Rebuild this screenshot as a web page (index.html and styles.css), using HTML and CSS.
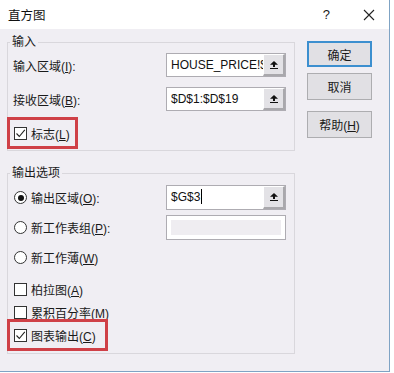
FILE: index.html
```html
<!DOCTYPE html>
<html lang="zh-CN">

<head>
  <meta charset="UTF-8">
  <meta name="viewport" content="width=device-width, initial-scale=1.0">
  <title>直方图</title>
  <link rel="stylesheet" href="styles.css">
</head>

<body>
  <div class="window">
    <!-- заголовок окна -->
    <div class="titlebar">
      <span class="titlebar__title">直方图</span>
      <span class="titlebar__help">?</span>
      <svg class="titlebar__close" width="12" height="12" viewBox="0 0 12 12">
        <path d="M1 1 L11 11 M11 1 L1 11" stroke="#222" stroke-width="1.1" fill="none" />
      </svg>
    </div>

    <div class="main">
      <div class="groups">
        <!-- ввод -->
        <fieldset class="group group_in">
          <legend class="group__legend">输入</legend>
          <div class="group__body">
            <div class="row">
              <span class="row__label">输入区域(<u>I</u>):</span>
              <div class="ref">
                <span class="ref__text">HOUSE_PRICE!$</span>
                <span class="ref__btn">
                  <svg width="8" height="8" viewBox="0 0 8 8">
                    <path d="M0 3.8 L4 0 L8 3.8 H5 V6 H3 V3.8 Z M0 7 H8 V8 H0 Z" fill="#111" />
                  </svg>
                </span>
              </div>
            </div>
            <div class="row row_second">
              <span class="row__label">接收区域(<u>B</u>):</span>
              <div class="ref">
                <span class="ref__text">$D$1:$D$19</span>
                <span class="ref__btn">
                  <svg width="8" height="8" viewBox="0 0 8 8">
                    <path d="M0 3.8 L4 0 L8 3.8 H5 V6 H3 V3.8 Z M0 7 H8 V8 H0 Z" fill="#111" />
                  </svg>
                </span>
              </div>
            </div>
            <div class="opt opt_mark opt_label">
              <span class="box">
                <svg width="11" height="11" viewBox="0 0 11 11">
                  <path d="M1.5 5.5 L4.3 8.5 L9.8 1.8" stroke="#222" stroke-width="1.1" fill="none" />
                </svg>
              </span>
              <span>标志(<u>L</u>)</span>
            </div>
          </div>
        </fieldset>

        <!-- вывод -->
        <fieldset class="group group_out">
          <legend class="group__legend">输出选项</legend>
          <div class="group__body">
            <div class="row row_out">
              <div class="opt">
                <span class="radio radio_on"></span>
                <span>输出区域(<u>O</u>):</span>
              </div>
              <div class="ref ref_out">
                <span class="ref__text">$G$3<span class="caret"></span></span>
                <span class="ref__btn">
                  <svg width="8" height="8" viewBox="0 0 8 8">
                    <path d="M0 3.8 L4 0 L8 3.8 H5 V6 H3 V3.8 Z M0 7 H8 V8 H0 Z" fill="#111" />
                  </svg>
                </span>
              </div>
            </div>
            <div class="row row_out row_second-out">
              <div class="opt">
                <span class="radio"></span>
                <span>新工作表组(<u>P</u>):</span>
              </div>
              <div class="ref ref_disabled"></div>
            </div>
            <div class="opt opt_book">
              <span class="radio"></span>
              <span>新工作薄(<u>W</u>)</span>
            </div>
            <div class="opt opt_pareto">
              <span class="box"></span>
              <span>柏拉图(<u>A</u>)</span>
            </div>
            <div class="opt opt_near">
              <span class="box"></span>
              <span>累积百分率(<u>M</u>)</span>
            </div>
            <div class="opt opt_near opt_mark opt_wide">
              <span class="box">
                <svg width="11" height="11" viewBox="0 0 11 11">
                  <path d="M1.5 5.5 L4.3 8.5 L9.8 1.8" stroke="#222" stroke-width="1.1" fill="none" />
                </svg>
              </span>
              <span>图表输出(<u>C</u>)</span>
            </div>
          </div>
        </fieldset>
      </div>

      <!-- кнопки -->
      <div class="buttons">
        <button class="btn btn_default">确定</button>
        <button class="btn">取消</button>
        <button class="btn btn_help">帮助(<u>H</u>)</button>
      </div>
    </div>
  </div>
</body>

</html>
```

FILE: styles.css
```css
* {
  box-sizing: border-box
}

body {
  margin: 0;
  background-color: #fff;
  font-family: "Liberation Sans", "Noto Sans CJK SC", sans-serif;
  font-size: 12px;
  color: #1a1a1a
}

.window {
  width: 390px;
  height: 372px;
  display: flex;
  flex-direction: column;
  background-color: #f0eef3;
  border-right: 1px solid #7fa3c4;
  border-bottom: 1px solid #7fa3c4
}

.titlebar {
  height: 29px;
  display: flex;
  align-items: center;
  padding: 0 14px 0 8px;
  background-color: #fff
}

.titlebar__title {
  font-size: 12.5px;
  color: #111
}

.titlebar__help {
  margin-left: auto;
  margin-right: 33px;
  font-size: 13px
}

.main {
  flex: 1;
  display: flex;
  padding: 5px 0 0 7px
}

.groups {
  width: 288px
}

.group {
  margin: 0;
  padding: 2px 8px 7px 5px;
  border: 1px solid #d9d7dc
}

.group_out {
  margin-top: 14px;
  padding-top: 3px;
  padding-bottom: 8px
}

.group__legend {
  margin-left: -3px;
  padding: 0 2px;
  line-height: 17px
}

.group__body {
  display: flex;
  flex-direction: column;
  align-items: flex-start
}

.row {
  width: 100%;
  height: 24px;
  display: flex;
  align-items: center;
  justify-content: space-between
}

.row_second {
  margin-top: 10px
}

.row_out {
  height: 25px
}

.row_second-out {
  margin-top: 5px
}

.ref {
  width: 120px;
  height: 100%;
  display: flex;
  background-color: #fff;
  border: 1px solid #aeacb2;
  overflow: hidden
}

.ref__text {
  flex: 1;
  overflow: hidden;
  white-space: nowrap;
  padding-left: 4px;
  font-size: 12px;
  line-height: 22px;
  color: #111
}

.ref_out .ref__text {
  line-height: 23px
}

.caret {
  display: inline-block;
  width: 1px;
  height: 15px;
  margin-left: 1px;
  vertical-align: -3px;
  background-color: #000
}

.ref__btn {
  width: 22px;
  display: flex;
  justify-content: center;
  padding-top: 6px;
  background-color: #e3e2e6;
  border-left: 1px solid #fff;
  border-top: 1px solid #fff;
  border-right: 2px solid #a9a8ac;
  border-bottom: 2px solid #a9a8ac
}

.ref_disabled {
  background-color: #efedf1;
  box-shadow: inset 0 0 0 4px #fff
}

.opt {
  height: 20px;
  display: flex;
  align-items: center;
  gap: 4px;
  padding-left: 1px;
  white-space: nowrap
}

.opt_label {
  margin-top: 12px
}

.opt_book {
  margin-top: 7px
}

.opt_pareto {
  margin-top: 12px
}

.opt_near {
  margin-top: 3px
}

.opt_mark {
  padding-right: 2px;
  outline: 3px solid #cf4047;
  outline-offset: 3px
}

.opt_wide {
  padding-right: 6px
}

.box {
  width: 13px;
  height: 13px;
  display: flex;
  align-items: center;
  justify-content: center;
  background-color: #fff;
  border: 1px solid #333
}

.radio {
  width: 13px;
  height: 13px;
  display: flex;
  align-items: center;
  justify-content: center;
  background-color: #fff;
  border: 1px solid #333;
  border-radius: 50%
}

.radio_on::after {
  content: "";
  width: 6px;
  height: 6px;
  border-radius: 50%;
  background-color: #111
}

.buttons {
  width: 65px;
  margin: 7px 0 0 12px;
  display: flex;
  flex-direction: column
}

.btn {
  height: 27px;
  padding: 0;
  font-family: inherit;
  font-size: 12px;
  color: #1a1a1a;
  background-color: #e1e0e4;
  border: 1px solid #adadb0
}

.btn_default {
  height: 26px;
  border: 2px solid #3c8fcf
}

.btn + .btn {
  margin-top: 6px
}

.btn_help {
  margin-top: 11px !important
}
```
